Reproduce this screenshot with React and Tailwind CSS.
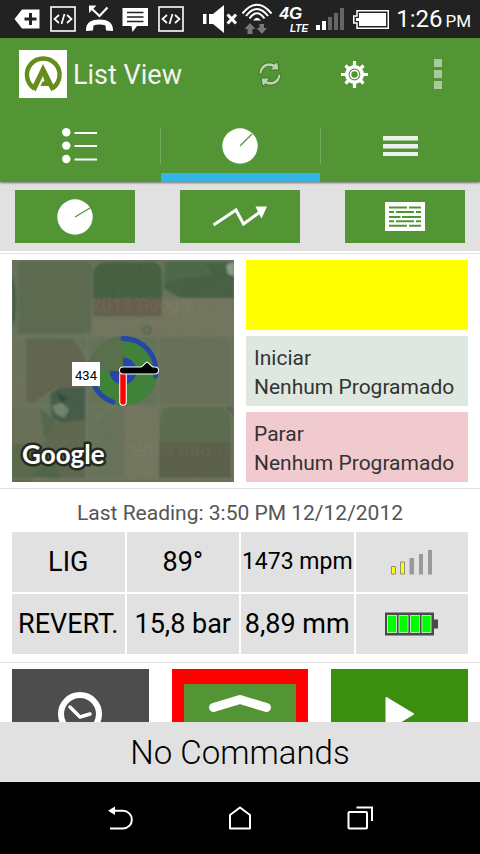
import { useState } from 'react';

const readings = [
  [
    { text: 'LIG', size: 'text-[27px]' },
    { text: '89°', size: 'text-[27px]' },
    { text: '1473 mpm', size: 'text-[23px]' },
    { icon: 'signal' },
  ],
  [
    { text: 'REVERT.', size: 'text-[27px]' },
    { text: '15,8 bar', size: 'text-[27px]' },
    { text: '8,89 mm', size: 'text-[27px]' },
    { icon: 'battery' },
  ],
];

function CodeIcon() {
  return (
    <svg width="26" height="26" viewBox="0 0 26 26" fill="none" stroke="#fff">
      <rect x="1" y="1" width="24" height="24" strokeWidth="1.6" />
      <path d="M9 9 L4.500 13 L9 17 M17 9 L21.500 13 L17 17 M14.500 8 L11.500 18" strokeWidth="1.7" />
    </svg>
  );
}

function StatusBar() {
  return (
    <div className="flex h-[38px] shrink-0 items-center bg-[#222222] pl-[14px] pr-[9px] text-white">
      <div className="flex items-center gap-[10px]">
        <svg width="26" height="26" viewBox="0 0 26 26">
          <path d="M0.500 13 L8 3.500 H25.500 V22.500 H8 Z" fill="#fff" />
          <path d="M16.500 7 V19 M10.500 13 H22.500" stroke="#222" strokeWidth="3" />
        </svg>
        <CodeIcon />
        <svg width="27" height="28" viewBox="0 0 27 28" className="-mr-px">
          <path d="M0 26 C-0.500 18 5 14.500 13.500 14.500 C22 14.500 27.500 18 27 26 L20 25.500 L19.500 20.500 C16 19 11 19 7.500 20.500 L7 25.500 Z" fill="#fff" />
          <path d="M5 3 L13.500 11 L21.500 2.500" fill="none" stroke="#fff" strokeWidth="2.200" />
          <path d="M3 8 V0.500 H10.500 Z" fill="#fff" />
        </svg>
        <svg width="26" height="26" viewBox="0 0 26 26">
          <path d="M0.500 2 H26 V20 H15 L10.500 26 L9.500 20 H0.500 Z" fill="#fff" />
          <path d="M5 6.500 H21.500 M5 11 H21.500 M5 15.500 H21.500" stroke="#222" strokeWidth="1.600" />
        </svg>
        <CodeIcon />
      </div>
      <div className="ml-auto flex items-center">
        <svg width="34" height="30" viewBox="0 0 34 30" fill="#fff">
          <path d="M0 10 H3.500 V20 H0 Z M6 10 H10 L21 1 V29 L10 20 H6 Z" />
          <path d="M24.500 10.500 L33 19.500 M33 10.500 L24.500 19.500" stroke="#fff" strokeWidth="3" />
        </svg>
        <svg width="32" height="34" viewBox="0 0 32 34" className="ml-1" fill="none">
          <path d="M1.500 11.500 Q16 -6 30.500 11.500 M5 14 Q16 0 27 14 M8.500 16.500 Q16 6 23.500 16.500" stroke="#fff" strokeWidth="2" />
          <path d="M12 18.500 Q16 13 20 18.500 Z" fill="#fff" />
          <path d="M9 21 L14.500 27 H11.500 V32 H6.500 V27 H3.500 Z M21 32 L15.500 26 H18.500 V22 H23 V26 H26 Z" fill="#777" />
        </svg>
        <div className="ml-[6px] flex flex-col items-end font-['Liberation_Sans'] font-bold italic">
          <span className="pr-[6px] text-[17px] leading-[19px]">4G</span>
          <span className="text-[10px] leading-[11px]">LTE</span>
        </div>
        <svg width="28" height="22" viewBox="0 0 28 22" className="ml-2" fill="#666">
          <path d="M0 17 H4 V22 H0 Z M6 13 H10 V22 H6 Z" fill="#fff" />
          <path d="M12 9 H16 V22 H12 Z M18 5 H22 V22 H18 Z M24 0 H28 V22 H24 Z" />
        </svg>
        <svg width="36" height="19" viewBox="0 0 36 19" className="ml-[9px]">
          <path d="M4 0.750 H35.250 V18.250 H4 V13 H0.750 V6 H4 Z" fill="none" stroke="#fff" strokeWidth="1.500" />
          <path d="M6 3 H33 V16 H6 V11 H3 V8 H6 Z" fill="#fff" />
        </svg>
        <div className="ml-[7px] flex items-baseline gap-[3px]">
          <span className="text-[24px] leading-[30px]">1:26</span>
          <span className="text-[17px]">PM</span>
        </div>
      </div>
    </div>
  );
}

function Logo() {
  return (
    <svg width="48" height="48" viewBox="0 0 48 48" className="ml-[19px] shrink-0 bg-white">
      <path d="M15.500 38.500 A16.300 16.300 0 1 1 33 38.500" fill="none" stroke="#658d1b" strokeWidth="4.500" />
      <path d="M24 14 L13 37 L16.500 41.500 L24 26 L25.500 31.500 H23.500 L21.500 36 H29.500 L32.500 41.500 L35.500 37 Z" fill="#658d1b" />
    </svg>
  );
}

function GearIcon() {
  return (
    <svg width="27" height="27" viewBox="0 0 27 27" fill="none" stroke="#fff">
      <path d="M13.500 0 V5 M13.500 22 V27 M0 13.500 H5 M22 13.500 H27 M4.500 4.500 L8 8 M19 19 L22.500 22.500 M22.500 4.500 L19 8 M8 19 L4.500 22.500" strokeWidth="3.200" />
      <circle cx="13.500" cy="13.500" r="7.700" strokeWidth="3.600" />
      <circle cx="13.500" cy="13.500" r="4" strokeWidth="1.600" />
    </svg>
  );
}

function RefreshIcon() {
  return (
    <svg width="26" height="28" viewBox="0 0 26 28">
      <g stroke="#3f6f2b" strokeWidth="1" fill="#bad5ae">
        <path d="M2 14 C2 5 10 0.500 17.500 4 L20.500 1.500 L22 10 L13 10 L15.500 7 C10 5 5 8.500 5 14 Z" />
        <path d="M24 14 C24 23 16 27.500 8.500 24 L5.500 26.500 L4 18 L13 18 L10.500 21 C16 23 21 19.500 21 14 Z" />
      </g>
    </svg>
  );
}

function PivotIcon({ hand }) {
  return (
    <svg width="36" height="36" viewBox="0 0 36 36">
      <circle cx="18" cy="18" r="17.700" fill="#fff" />
      <path d={hand} stroke="#539535" strokeWidth="1.200" />
    </svg>
  );
}

function ListIcon() {
  return (
    <svg width="36" height="36" viewBox="0 0 36 36" fill="#fff">
      <circle cx="4.300" cy="4.300" r="4.200" />
      <circle cx="4.300" cy="17.600" r="4.200" />
      <circle cx="4.300" cy="31" r="4.200" />
      <path d="M12.500 4 H35 V6 H12.500 Z M12.500 17 H35 V19 H12.500 Z M12.500 30.500 H35 V32.500 H12.500 Z" />
    </svg>
  );
}

function MenuIcon() {
  return (
    <svg width="35" height="20" viewBox="0 0 35 20" fill="#eef0ee">
      <path d="M0 0 H35 V4.500 H0 Z M0 8 H35 V12.500 H0 Z M0 16 H35 V20 H0 Z" />
    </svg>
  );
}

const tabs = [
  { id: 'list', label: 'List', icon: <ListIcon /> },
  { id: 'pivot', label: 'Pivot', icon: <PivotIcon hand="M18 18 L30 6" /> },
  { id: 'menu', label: 'Menu', icon: <MenuIcon /> },
];

function AppBar() {
  const [active, setActive] = useState('pivot');

  return (
    <header className="z-10 shrink-0 bg-[#539535] text-white shadow-[0_1px_2px_0px_rgba(0,0,0,0.5)]">
      <div className="flex h-[72px] items-center">
        <Logo />
        <h1 className="ml-[6px] pt-[2px] text-[27px] text-[#f3f3f3]">List View</h1>
        <div className="ml-auto flex">
          <button aria-label="Refresh" className="flex h-[72px] w-[84px] items-center justify-center"><RefreshIcon /></button>
          <button aria-label="Settings" className="flex h-[72px] w-[84px] items-center justify-center"><GearIcon /></button>
          <button aria-label="More" className="flex h-[72px] w-[84px] flex-col items-center justify-center gap-[3px]">
            <span className="size-2 bg-[#a9ca9a]" />
            <span className="size-2 bg-[#a9ca9a]" />
            <span className="size-2 bg-[#a9ca9a]" />
          </button>
        </div>
      </div>
      <nav className="grid grid-cols-3">
        {tabs.map((tab, i) => (
          <button
            key={tab.id}
            aria-label={tab.label}
            onClick={() => setActive(tab.id)}
            className="relative flex h-[72px] items-center justify-center"
          >
            {tab.icon}
            {i < 2 && <span className="absolute right-0 top-[18px] h-9 w-px translate-x-full bg-[#75aa5d]" />}
            {active === tab.id && <span className="absolute bottom-0 left-px right-0 h-[9px] bg-[#33b5e5]" />}
          </button>
        ))}
      </nav>
    </header>
  );
}

function Toolbar() {
  const box = 'flex h-[53px] items-center justify-center bg-[#539535]';
  return (
    <div className="grid grid-cols-3 gap-[45px] bg-[#e1e1e1] px-[15px] py-2">
      <button aria-label="Pivot" className={box}><PivotIcon hand="M18 18 L33 9" /></button>
      <button aria-label="Chart" className={box}>
        <svg width="56" height="24" viewBox="0 0 56 24">
          <path d="M1.500 20 L24 5 L31.500 19 L48 7" fill="none" stroke="#fff" strokeWidth="3" />
          <path d="M43.500 1.500 H55 L49.500 13.500 L47 9 Z" fill="#fff" />
        </svg>
      </button>
      <button aria-label="Report" className={box}>
        <svg width="40" height="29" viewBox="0 0 40 29">
          <rect width="40" height="29" fill="#fff" />
          <g stroke="#539535" strokeWidth="1.900">
            <path d="M4 5.500 H22 M24 5.500 H36 M4 10 H9 M11 10 H29 M31 10 H36 M4 15 H15.500 M17 15 H36 M4 19.300 H9 M11 19.300 H29 M31 19.300 H36 M4 23.700 H22 M24 23.700 H36" />
          </g>
        </svg>
      </button>
    </div>
  );
}

function FieldMap() {
  return (
    <svg viewBox="0 0 222 222" className="block w-full" role="img" aria-label="Pivot map">
      <defs>
        <filter id="soft" x="-5%" y="-5%" width="110%" height="110%">
          <feGaussianBlur stdDeviation="0.9" />
        </filter>
        <filter id="grain" x="0" y="0" width="100%" height="100%">
          <feTurbulence type="fractalNoise" baseFrequency="0.27" numOctaves="3" seed="4" />
          <feColorMatrix values="0 0 0 0 0.12  0 0 0 0 0.16  0 0 0 0 0.1  1.2 0 0 0 -0.45" />
        </filter>
      </defs>
      <rect width="222" height="222" fill="#66735a" />
      <g filter="url(#soft)">
        <path d="M6 2 H76 Q82 6 79 14 V70 Q79 74 72 74 H7 Z" fill="#5b6b4f" />
        <path d="M0 14 Q6 30 3 60 L0 66 Z" fill="#465d46" />
        <path d="M81 38 V12 Q84 3 94 2 H142 Q150 5 150 14 V38 Z" fill="#446041" />
        <path d="M81 38 H150 V56 H82 Z" fill="#665f4d" />
        <path d="M80 57 H150 V38 H222 V75 H80 Z" fill="#74765e" />
        <path d="M153 2 H222 V38 H168 L152 28 Z" fill="#446143" />
        <path d="M153 3 H195 L200 14 L153 22 Z" fill="#4d6848" />
        <path d="M214 5 L222 2 V16 L216 14 Z" fill="#8da08f" />
        <path d="M14 79 H62 Q70 84 75 100 V128 H45 L24 142 H14 Z" fill="#626550" />
        <path d="M0 77 H14 V144 H0 Z" fill="#6d735b" />
        <path d="M147 76 H218 V144 H147 Z" fill="#6a7059" />
        <path d="M38 132 L48 128 H73 V160 L60 168 L40 158 Z" fill="#445c4a" />
        <path d="M40 146 L50 142 L57 150 L52 158 L44 154 Z" fill="#72856f" />
        <path d="M45 132 L55 138 L50 144 Z" fill="#33493a" />
        <path d="M0 146 H26 L40 162 L30 182 L0 184 Z" fill="#6b7059" />
        <path d="M28 148 L44 162 L40 180 L32 176 Z" fill="#53684d" />
        <path d="M42 163 L73 160 V218 H34 L28 190 Z" fill="#5e684f" />
        <path d="M0 184 H24 L36 202 L18 222 H0 Z" fill="#5a674b" />
        <path d="M20 216 L40 198 L50 220 Z" fill="#4f6547" />
        <path d="M76 148 H110 V218 H78 Z" fill="#67735a" />
        <path d="M112 146 H146 V218 H112 Z" fill="#74775f" />
        <path d="M148 158 Q150 148 160 146 H208 Q218 150 219 160 V182 H148 Z" fill="#5b6d50" />
        <path d="M147 182 H219 V218 H147 Z" fill="#5b614a" />
        <path d="M212 145 H222 V156 Z" fill="#465d46" />
        <g fill="none" stroke="#747a63" strokeWidth="1.500">
          <path d="M0 76 H222 M75 72 V218 M146 74 V222 M220 74 V222 M0 146 H38 M76 146 H222 M0 219 H222" />
          <path d="M24 142 L45 128 M80 164 Q90 150 104 146 M62 79 Q72 88 77 108" />
        </g>
        <circle cx="135" cy="70" r="3.500" fill="none" stroke="#50664c" strokeWidth="2" />
      </g>
      <rect width="222" height="222" filter="url(#grain)" opacity="0.4" />
      <g fill="#ffffff" fillOpacity="0.05" className="font-['Roboto'] font-bold">
        <text x="79" y="51" fontSize="18">2013 Google</text>
        <text x="120" y="197" fontSize="18">2013 Goo</text>
      </g>
      <path d="M111 111 H76 A35 35 0 0 1 111 76 Z" fill="#58704c" />
      <path d="M111 111 V76 A35 35 0 1 1 76 111 Z" fill="#40823a" />
      <path d="M111 111 V97.500 A13.500 13.500 0 1 1 97.500 111 Z" fill="#2747a8" />
      <path d="M111 78.500 A32.500 32.500 0 0 1 143.500 116 M81 122 A32.500 32.500 0 0 0 101 142" fill="none" stroke="#2747a8" strokeWidth="5" strokeLinecap="round" />
      <path d="M111 115 V142" stroke="#fff" strokeWidth="7.500" strokeLinecap="round" />
      <path d="M111 115 V142" stroke="#ff0000" strokeWidth="5.500" strokeLinecap="round" />
      <path d="M128 109 L135 102.500 L142 109 Z" stroke="#fff" strokeWidth="2" strokeLinejoin="round" />
      <path d="M111 110.500 H143" stroke="#fff" strokeWidth="8" strokeLinecap="round" />
      <path d="M111 110.500 H143" stroke="#000" strokeWidth="6" strokeLinecap="round" />
      <path d="M128 109 L135 102.500 L142 109 Z" fill="#000" />
      <rect x="60" y="102" width="28" height="24" fill="#fff" />
      <text x="74" y="120" textAnchor="middle" fontSize="13" className="font-['Roboto'] font-normal">434</text>
      <text
        x="10"
        y="204"
        fontSize="26"
        fill="#fff"
        stroke="#26291f"
        strokeWidth="5"
        strokeLinejoin="round"
        className="font-['Lato'] font-bold [paint-order:stroke]"
      >
        Google
      </text>
    </svg>
  );
}

function SchedulePanel({ title, value, color }) {
  return (
    <div className={`flex flex-1 flex-col justify-center px-2 pt-1 text-[21px] leading-[29px] text-[#333333] ${color}`}>
      <span>{title}</span>
      <span className="whitespace-nowrap">{value}</span>
    </div>
  );
}

function SignalIcon() {
  return (
    <svg width="42" height="26" viewBox="0 0 42 26" className="mx-auto block">
      <path d="M0.500 17.500 H4.500 V25 H0.500 Z M9.500 13 H13.500 V25 H9.500 Z" fill="#ffff00" stroke="#8f8f70" strokeWidth="1" />
      <path d="M18.500 9 H23 V25.500 H18.500 Z M28 5 H32 V25.500 H28 Z M37 1 H41 V25.500 H37 Z" fill="#999" />
    </svg>
  );
}

function BatteryIcon() {
  return (
    <svg width="53" height="24" viewBox="0 0 53 24" className="mx-auto block">
      <path d="M0 0.500 H49 V7.500 H53 V16.500 H49 V23.500 H0 Z" fill="#4a4a4a" />
      <g fill="#00ff00" stroke="#b4e8b4" strokeWidth="1">
        <rect x="2.500" y="3.500" width="9" height="17" />
        <rect x="14" y="3.500" width="9" height="17" />
        <rect x="25.500" y="3.500" width="9" height="17" />
        <rect x="37" y="3.500" width="9" height="17" />
      </g>
    </svg>
  );
}

function Readings() {
  return (
    <section className="border-b border-[#e1e1e1] px-[10px] pb-[6px]">
      <p className="pb-px pt-[9px] text-center text-[21px] leading-[31px] text-[#555555]">Last Reading: 3:50 PM 12/12/2012</p>
      <table className="w-full table-fixed border-separate border-spacing-[2px]">
        <tbody>
          {readings.map((row, i) => (
            <tr key={i}>
              {row.map((cell, j) => (
                <td key={j} className="h-[60px] whitespace-nowrap bg-[#e1e1e1] p-0 text-center align-middle text-black">
                  {cell.text && <span className={cell.size}>{cell.text}</span>}
                  {cell.icon === 'signal' && <SignalIcon />}
                  {cell.icon === 'battery' && <BatteryIcon />}
                </td>
              ))}
            </tr>
          ))}
        </tbody>
      </table>
    </section>
  );
}

function Actions() {
  return (
    <div className="grid grid-cols-3 gap-[23px] px-3 py-[6px]">
      <button aria-label="Schedule" className="flex h-[90px] items-center justify-center bg-[#4d4d4d]">
        <svg width="44" height="44" viewBox="0 0 44 44" fill="none" stroke="#fff">
          <circle cx="22" cy="22" r="19" strokeWidth="6" />
          <path d="M12 15 L22 25 L32 22" strokeWidth="3.500" strokeLinecap="round" strokeLinejoin="round" />
        </svg>
      </button>
      <button aria-label="Direction" className="flex h-[90px] items-start justify-center border-x-[12px] border-y-[15px] border-[#ff0000] bg-[#539535] pt-[11px]">
        <svg width="62" height="17" viewBox="0 0 62 17">
          <path d="M4.500 12.500 L31 4.500 L57.500 12.500" fill="none" stroke="#fff" strokeWidth="9" strokeLinecap="round" strokeLinejoin="round" />
        </svg>
      </button>
      <button aria-label="Start" className="flex h-[90px] items-center justify-center bg-[#3c8f0e]">
        <svg width="30" height="36" viewBox="0 0 30 36">
          <path d="M1.500 2 L28 18 L1.500 34 Z" fill="#fff" stroke="#fff" strokeWidth="2" strokeLinejoin="round" />
        </svg>
      </button>
    </div>
  );
}

function NavBar() {
  const key = 'flex h-[72px] w-[120px] items-center justify-center';
  return (
    <div className="flex shrink-0 justify-center bg-black">
      <button aria-label="Back" className={key}>
        <svg width="26" height="24" viewBox="0 0 26 24">
          <path d="M3 4.800 H16 A8.600 8.600 0 0 1 16 22.500 H3" fill="none" stroke="#fff" strokeWidth="2" />
          <path d="M1 4.800 L8 0.500 V9 Z" fill="#fff" />
        </svg>
      </button>
      <button aria-label="Home" className={key}>
        <svg width="24" height="24" viewBox="0 0 24 24">
          <path d="M2 22.500 V9 L12 1.500 L22 9 V22.500 Z" fill="none" stroke="#fff" strokeWidth="2" strokeLinejoin="round" />
        </svg>
      </button>
      <button aria-label="Recent" className={key}>
        <svg width="26" height="24" viewBox="0 0 26 24" fill="none" stroke="#fff" strokeWidth="2">
          <rect x="1.500" y="6" width="18.500" height="16.500" rx="1" />
          <path d="M9.500 1.500 H25 V15" />
        </svg>
      </button>
    </div>
  );
}

export default function App() {
  return (
    <div className="flex h-screen flex-col bg-white font-['Roboto',sans-serif]">
      <StatusBar />
      <AppBar />
      <main className="min-h-0 flex-1 overflow-y-auto [scrollbar-width:none]">
        <Toolbar />
        <section className="mt-[2px] grid grid-cols-2 gap-3 border-y border-[#e1e1e1] px-3 py-[6px]">
          <FieldMap />
          <div className="grid grid-rows-3 gap-[6px]">
            <div className="bg-[#ffff00]" />
            <SchedulePanel title="Iniciar" value="Nenhum Programado" color="bg-[#dee8e0]" />
            <SchedulePanel title="Parar" value="Nenhum Programado" color="bg-[#f1cad0]" />
          </div>
        </section>
        <Readings />
        <Actions />
      </main>
      <footer className="shrink-0 bg-[#e1e1e1] pb-[9px] pt-[11px] text-center text-[33px] font-light leading-10 text-black">No Commands</footer>
      <NavBar />
    </div>
  );
}
